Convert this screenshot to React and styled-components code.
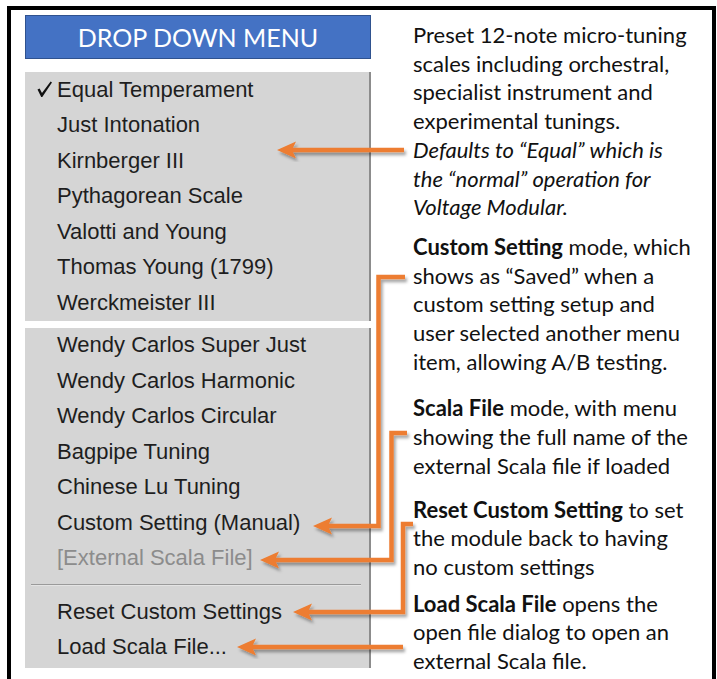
import React from 'react';
import styled, { createGlobalStyle } from 'styled-components';

const GlobalStyle = createGlobalStyle`
  html, body {
    margin: 0;
    padding: 0;
    overflow: hidden;
    background: #fff;
  }
`;

const Frame = styled.div`
  position: relative;
  box-sizing: border-box;
  width: 709px;
  height: 700px;
  margin: 6px 0 0 7px;
  border: 4px solid #000;
  display: flex;
  padding: 5px 0 0 14px;
`;

const MenuColumn = styled.div`
  width: 346px;
  display: flex;
  flex-direction: column;
`;

const TitleBar = styled.div`
  box-sizing: border-box;
  height: 44px;
  background-color: #4472c4;
  border: 1px solid #2f528f;
  color: #fff;
  font-family: Lato, "Open Sans", sans-serif;
  font-size: 25px;
  display: flex;
  align-items: center;
  justify-content: center;
`;

const Panel = styled.div`
  box-sizing: border-box;
  margin-top: ${p => p.$gap}px;
  padding-bottom: ${p => p.$padBottom || 0}px;
  background-color: #d5d5d5;
  border-right: 2px solid #8c8c8c;
`;

const Item = styled.div`
  display: flex;
  align-items: center;
  height: 35.5px;
  font-family: "Liberation Sans", Arial, sans-serif;
  font-size: 22px;
  color: ${p => (p.$disabled ? '#8c8c8c' : '#1e1e1e')};
`;

const CheckSlot = styled.span`
  width: 32px;
  padding-left: 11px;
  box-sizing: border-box;
  display: flex;
  align-items: center;
`;

const Separator = styled.div`
  height: 18px;
  display: flex;
  align-items: center;
  padding-left: 6px;
  padding-right: 8px;

  &::after {
    content: '';
    flex: 1;
    height: 1px;
    background-color: #9a9a9a;
    border-bottom: 1px solid #e4e4e4;
  }
`;

const Notes = styled.div`
  margin-left: 42px;
  padding-top: 6px;
  width: 297px;
  font-family: Lato, "Open Sans", sans-serif;
  font-size: 22px;
  line-height: 28.7px;
  color: #111;
`;

const Note = styled.div`
  margin-top: ${p => p.$gap || 0}px;
  white-space: nowrap;
`;

const Line = styled.span`
  display: block;
  font-style: ${p => (p.$italic ? 'italic' : 'inherit')};
`;

const Strong = styled.b`
  font-weight: 700;
`;

const Arrows = styled.svg`
  position: absolute;
  left: 0;
  top: 0;
  pointer-events: none;
`;

const ORANGE = '#ed7d31';

const arrows = [
  { d: 'M404 150 H290', tip: [277, 150] },
  { d: 'M405 277 H378.5 V526 H326', tip: [313, 526] },
  { d: 'M407 433 H391.5 V560 H273', tip: [260, 560] },
  { d: 'M413 524 H403 V612 H306', tip: [293, 612] },
  { d: 'M403 647 H250', tip: [237, 647] },
];

const topItems = [
  'Equal Temperament',
  'Just Intonation',
  'Kirnberger III',
  'Pythagorean Scale',
  'Valotti and Young',
  'Thomas Young (1799)',
  'Werckmeister III',
];

const lowerItems = [
  'Wendy Carlos Super Just',
  'Wendy Carlos Harmonic',
  'Wendy Carlos Circular',
  'Bagpipe Tuning',
  'Chinese Lu Tuning',
  'Custom Setting (Manual)',
];

const CheckMark = () => (
  <svg width="17" height="17" viewBox="0 0 17 17">
    <path d="M1.5 8.6 L3.6 7.4 L6 12 L14.6 0.6 L16 1.6 L6.3 16 L5.2 16 Z" fill="#111" />
  </svg>
);

const App = () => {
  return (
    <>
      <GlobalStyle />
      <Frame>
        <MenuColumn>
          <TitleBar>DROP DOWN MENU</TitleBar>
          <Panel $gap={13}>
            {topItems.map((name, i) => (
              <Item key={name}>
                <CheckSlot>{i === 0 && <CheckMark />}</CheckSlot>
                {name}
              </Item>
            ))}
          </Panel>
          <Panel $gap={7} $padBottom={3}>
            {lowerItems.map(name => (
              <Item key={name}>
                <CheckSlot />
                {name}
              </Item>
            ))}
            <Item $disabled>
              <CheckSlot />
              [External Scala File]
            </Item>
            <Separator />
            <Item>
              <CheckSlot />
              Reset Custom Settings
            </Item>
            <Item>
              <CheckSlot />
              Load Scala File...
            </Item>
          </Panel>
        </MenuColumn>

        <Notes>
          <Note>
            <Line>Preset 12-note micro-tuning</Line>
            <Line>scales including orchestral,</Line>
            <Line>specialist instrument and</Line>
            <Line>experimental tunings.</Line>
            <Line $italic>Defaults to “Equal” which is</Line>
            <Line $italic>the “normal” operation for</Line>
            <Line $italic>Voltage Modular.</Line>
          </Note>
          <Note $gap={11}>
            <Line><Strong>Custom Setting</Strong> mode, which</Line>
            <Line>shows as “Saved” when a</Line>
            <Line>custom setting setup and</Line>
            <Line>user selected another menu</Line>
            <Line>item, allowing A/B testing.</Line>
          </Note>
          <Note $gap={18}>
            <Line><Strong>Scala File</Strong> mode, with menu</Line>
            <Line>showing the full name of the</Line>
            <Line>external Scala file if loaded</Line>
          </Note>
          <Note $gap={15}>
            <Line><Strong>Reset Custom Setting</Strong> to set</Line>
            <Line>the module back to having</Line>
            <Line>no custom settings</Line>
          </Note>
          <Note $gap={8}>
            <Line><Strong>Load Scala File</Strong> opens the</Line>
            <Line>open file dialog to open an</Line>
            <Line>external Scala file.</Line>
          </Note>
        </Notes>

        <Arrows width="701" height="670" viewBox="11 10 701 670">
          <defs>
            <filter id="arrowShadow" x="-20%" y="-20%" width="140%" height="140%">
              <feDropShadow dx="2" dy="3" stdDeviation="1.8" floodColor="#000" floodOpacity="0.35" />
            </filter>
          </defs>
          {arrows.map(({ d, tip: [x, y] }) => (
            <g key={d} filter="url(#arrowShadow)">
              <path d={d} fill="none" stroke={ORANGE} strokeWidth="4.5" strokeLinejoin="miter" />
              <path d={`M${x} ${y} L${x + 19} ${y - 8.5} L${x + 15} ${y} L${x + 19} ${y + 8.5} Z`} fill={ORANGE} />
            </g>
          ))}
        </Arrows>
      </Frame>
    </>
  );
};

export default App;
